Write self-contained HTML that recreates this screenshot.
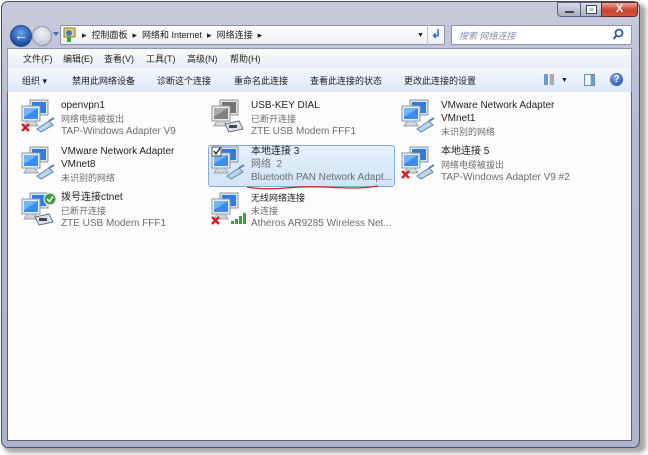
<!DOCTYPE html>
<html><head><meta charset="utf-8"><style>
*{margin:0;padding:0;box-sizing:border-box}
body{width:648px;height:455px;background:#fff;position:relative;overflow:hidden;font-family:"Liberation Sans","Noto Sans CJK SC",sans-serif;font-size:9px;line-height:12px;color:#1e1e1e}
.shadow{position:absolute;left:4px;top:4px;width:642px;height:449px;background:#a8a8a8;border-radius:7px;filter:blur(2px)}
.win{position:absolute;left:1px;top:1px;width:639px;height:447px;border:1px solid #4a4f6c;border-radius:7px;background:linear-gradient(#c9cbdd,#b4b8d0 30%,#aeb3cc);}
.a{position:absolute}
.content{left:7px;top:92px;width:625px;height:349px;background:#fdfdfd;border:1px solid #5a5e80;border-top:none}
.menubar{left:7px;top:48px;width:625px;height:20px;background:linear-gradient(#fbfcfe,#e8eef8);border:1px solid #8e95b4;border-bottom:none}
.cmdbar{left:7px;top:68px;width:625px;height:25px;background:linear-gradient(#f4f8fd,#dde8f5);border-left:1px solid #8e95b4;border-right:1px solid #8e95b4;border-bottom:1px solid #a0b0cc}
.addr{left:60px;top:25px;width:385px;height:20px;background:linear-gradient(#fff,#eef0f6);border:1px solid #8c93ad;border-radius:2px}
.search{left:451px;top:25px;width:181px;height:20px;background:#fff;border:1px solid #8c93ad;border-radius:2px;color:#8a8fa8;font-style:italic;padding:4px 0 0 7px}
.t{position:absolute;white-space:nowrap}
.g{color:#6d6d6d}
.L{font-size:10px}
</style></head><body>
<div class="shadow"></div>
<div class="win"></div>
<div class="a" style="left:557px;top:2px;width:24px;height:15px;border:1px solid #5a6080;border-radius:0 0 0 4px;background:linear-gradient(#d9dce8,#a7aec6)"><div class="a" style="left:7px;top:8px;width:9px;height:2px;background:#fff;border:1px solid #444"></div></div>
<div class="a" style="left:580px;top:2px;width:22px;height:15px;border:1px solid #5a6080;background:linear-gradient(#d9dce8,#a7aec6)"><div class="a" style="left:6px;top:3px;width:9px;height:7px;border:2px solid #fff;outline:1px solid #444"></div></div>
<div class="a" style="left:601px;top:2px;width:37px;height:15px;border:1px solid #6a2a22;border-radius:0 0 4px 0;background:linear-gradient(#e8a89a,#c8432e 55%,#d2553c);color:#fff;font-weight:bold;font-size:11px;text-align:center;line-height:13px">X</div>
<div class="a" style="left:10px;top:25px;width:22px;height:22px;border-radius:50%;background:radial-gradient(circle at 50% 35%,#6fa4e8,#1a4fa8 70%,#0c2d6a);border:1px solid #284a80;color:#fff;font-weight:bold;font-size:14px;text-align:center;line-height:19px">&#8592;</div>
<div class="a" style="left:32px;top:26px;width:20px;height:20px;border-radius:50%;background:radial-gradient(circle at 50% 35%,#f2f3f7,#b9bdcb);border:1px solid #8d92a6"></div>
<div class="a" style="left:53px;top:32px;width:0;height:0;border-left:3px solid transparent;border-right:3px solid transparent;border-top:4px solid #3a6ab0"></div>
<div class="a addr"></div>
<svg class="a" style="left:63px;top:27px" width="14" height="16"><rect x="1" y="1" width="11" height="9" fill="#e8d070" stroke="#8a7a30"/><circle cx="6" cy="6" r="3" fill="#3a7ad0"/><rect x="4" y="10" width="4" height="5" fill="#40a040"/></svg>
<div class="t" style="left:82px;top:29px">▸&nbsp; 控制面板 &nbsp;▸&nbsp; 网络和 Internet &nbsp;▸&nbsp; 网络连接 &nbsp;▸</div>
<div class="t" style="left:417px;top:30px;font-size:7px">▼</div>
<div class="a" style="left:427px;top:25px;width:18px;height:20px;border-left:1px solid #c0c4d4"></div>
<div class="t" style="left:431px;top:28px;color:#2a6ad0;font-size:12px;font-weight:bold">↲</div>
<div class="a search">搜索 网络连接</div>
<svg class="a" style="left:612px;top:28px" width="12" height="13"><circle cx="7" cy="5" r="3.5" fill="none" stroke="#2a5aa0" stroke-width="1.8"/><line x1="4.5" y1="7.5" x2="1.5" y2="11" stroke="#2a5aa0" stroke-width="2"/></svg>
<div class="a menubar"></div>
<div class="t" style="left:23px;top:53px">文件(F)</div>
<div class="t" style="left:63px;top:53px">编辑(E)</div>
<div class="t" style="left:104px;top:53px">查看(V)</div>
<div class="t" style="left:146px;top:53px">工具(T)</div>
<div class="t" style="left:187px;top:53px">高级(N)</div>
<div class="t" style="left:230px;top:53px">帮助(H)</div>
<div class="a cmdbar"></div>
<div class="t" style="left:22px;top:75px">组织 ▾</div>
<div class="t" style="left:72px;top:75px">禁用此网络设备</div>
<div class="t" style="left:157px;top:75px">诊断这个连接</div>
<div class="t" style="left:234px;top:75px">重命名此连接</div>
<div class="t" style="left:310px;top:75px">查看此连接的状态</div>
<div class="t" style="left:404px;top:75px">更改此连接的设置</div>
<div class="a" style="left:544px;top:74px;width:10px;height:11px;background:linear-gradient(90deg,#6a9ad0 40%,#fff 40%,#fff 55%,#aab 55%)"></div>
<div class="t" style="left:561px;top:75px;font-size:7px">▼</div>
<div class="a" style="left:584px;top:74px;width:11px;height:12px;border:1px solid #6a8ab0;background:linear-gradient(90deg,#fff 60%,#6aa0d8 60%)"></div>
<div class="a" style="left:610px;top:73px;width:13px;height:13px;border-radius:50%;background:radial-gradient(circle at 40% 35%,#7aa8f0,#1a3f9a);color:#fff;font-weight:bold;font-size:10px;text-align:center;line-height:13px">?</div>
<div class="a content"></div>
<div class="a" style="left:208px;top:145px;width:187px;height:42px;background:linear-gradient(#e6f0fc,#d2e4f8);border:1px solid #84acdd;border-radius:3px"></div>
<svg width="0" height="0" style="position:absolute"><defs>
<g id="pc"><rect x="9" y="1" width="18" height="15" fill="#dfe4ea" stroke="#8a96a4"/><rect x="11" y="3" width="14" height="11" fill="#2f7be0"/><rect x="1" y="7" width="18" height="15" fill="#e9edf1" stroke="#8a96a4"/><rect x="3" y="9" width="14" height="11" fill="#3a8cf0"/><path d="M3 9 L17 9 L3 18Z" fill="#8cc4fa" opacity=".7"/><path d="M6 22 L14 22 L17 27 L3 27Z" fill="#cfd5dc" stroke="#9aa4ae"/></g>
<g id="cable"><path d="M16 30 L28 22 L32 26 L20 33Z" fill="#bcd6ea" stroke="#5e86a8"/><path d="M28 22 L33 19" stroke="#5e86a8" stroke-width="2"/></g>
<g id="modem"><path d="M14 25 L28 22 L32 30 L18 33Z" fill="#dfe3e8" stroke="#6a7480"/><rect x="18" y="26" width="8" height="3" fill="#3a4a5a"/></g>
<g id="x"><path d="M1 25 L8 32 M8 25 L1 32" stroke="#d02020" stroke-width="2.4"/></g>
</defs></svg>
<svg class="a" style="left:21px;top:99px" width="36" height="36"><use href="#pc"/><use href="#cable"/><use href="#x"/></svg>
<div class="t L" style="left:61px;top:100px">openvpn1</div><div class="t g" style="left:61px;top:113px">网络电缆被拔出</div><div class="t g L" style="left:61px;top:126px">TAP-Windows Adapter V9</div>
<svg class="a" style="left:21px;top:146px" width="36" height="36"><use href="#pc"/><use href="#cable"/></svg>
<div class="t L" style="left:61px;top:146px">VMware Network Adapter</div><div class="t L" style="left:61px;top:159px">VMnet8</div><div class="t g" style="left:61px;top:172px">未识别的网络</div>
<svg class="a" style="left:21px;top:192px" width="36" height="36"><use href="#pc"/><use href="#modem"/><circle cx="29" cy="7" r="6" fill="#3aa040" stroke="#fff"/><path d="M26 7 L28.5 9.5 L32 4.5" stroke="#fff" stroke-width="1.6" fill="none"/></svg>
<div class="t L" style="left:61px;top:192px">拨号连接ctnet</div><div class="t g" style="left:61px;top:205px">已断开连接</div><div class="t g L" style="left:61px;top:218px">ZTE USB Modem FFF1</div>
<svg class="a" style="left:211px;top:99px" width="36" height="36"><g style="filter:grayscale(1)"><use href="#pc"/></g><use href="#modem"/></svg>
<div class="t L" style="left:251px;top:100px">USB-KEY DIAL</div><div class="t g" style="left:251px;top:113px">已断开连接</div><div class="t g L" style="left:251px;top:126px">ZTE USB Modem FFF1</div>
<svg class="a" style="left:211px;top:146px" width="36" height="36"><use href="#pc"/><use href="#cable"/><rect x="1" y="1" width="9" height="9" fill="#fff" stroke="#555"/><path d="M3 5 L5 8 L9 2" stroke="#222" stroke-width="1.3" fill="none"/></svg>
<div class="t L" style="left:251px;top:146px">本地连接 3</div><div class="t g L" style="left:251px;top:159px">网络&nbsp; 2</div><div class="t g L" style="left:251px;top:172px">Bluetooth PAN Network Adapt...</div>
<svg class="a" style="left:245px;top:184px" width="135" height="8"><path d="M2 3 Q20 6 40 4 T80 3 T110 4 T133 2" stroke="#e02020" stroke-width="1.3" fill="none"/></svg>
<svg class="a" style="left:211px;top:192px" width="36" height="36"><use href="#pc"/><use href="#x"/><path d="M20 32 h3 v-3 h-3z M24 32 h3 v-5 h-3z M28 32 h3 v-8 h-3z M32 32 h3 v-11 h-3z" fill="#3aa040"/></svg>
<div class="t" style="left:251px;top:192px">无线网络连接</div><div class="t g" style="left:251px;top:205px">未连接</div><div class="t g L" style="left:251px;top:218px">Atheros AR9285 Wireless Net...</div>
<svg class="a" style="left:401px;top:99px" width="36" height="36"><use href="#pc"/><use href="#cable"/></svg>
<div class="t L" style="left:441px;top:100px">VMware Network Adapter</div><div class="t L" style="left:441px;top:113px">VMnet1</div><div class="t g" style="left:441px;top:126px">未识别的网络</div>
<svg class="a" style="left:401px;top:146px" width="36" height="36"><use href="#pc"/><use href="#cable"/><use href="#x"/></svg>
<div class="t L" style="left:441px;top:146px">本地连接 5</div><div class="t g" style="left:441px;top:159px">网络电缆被拔出</div><div class="t g L" style="left:441px;top:172px">TAP-Windows Adapter V9 #2</div>
</body></html>
